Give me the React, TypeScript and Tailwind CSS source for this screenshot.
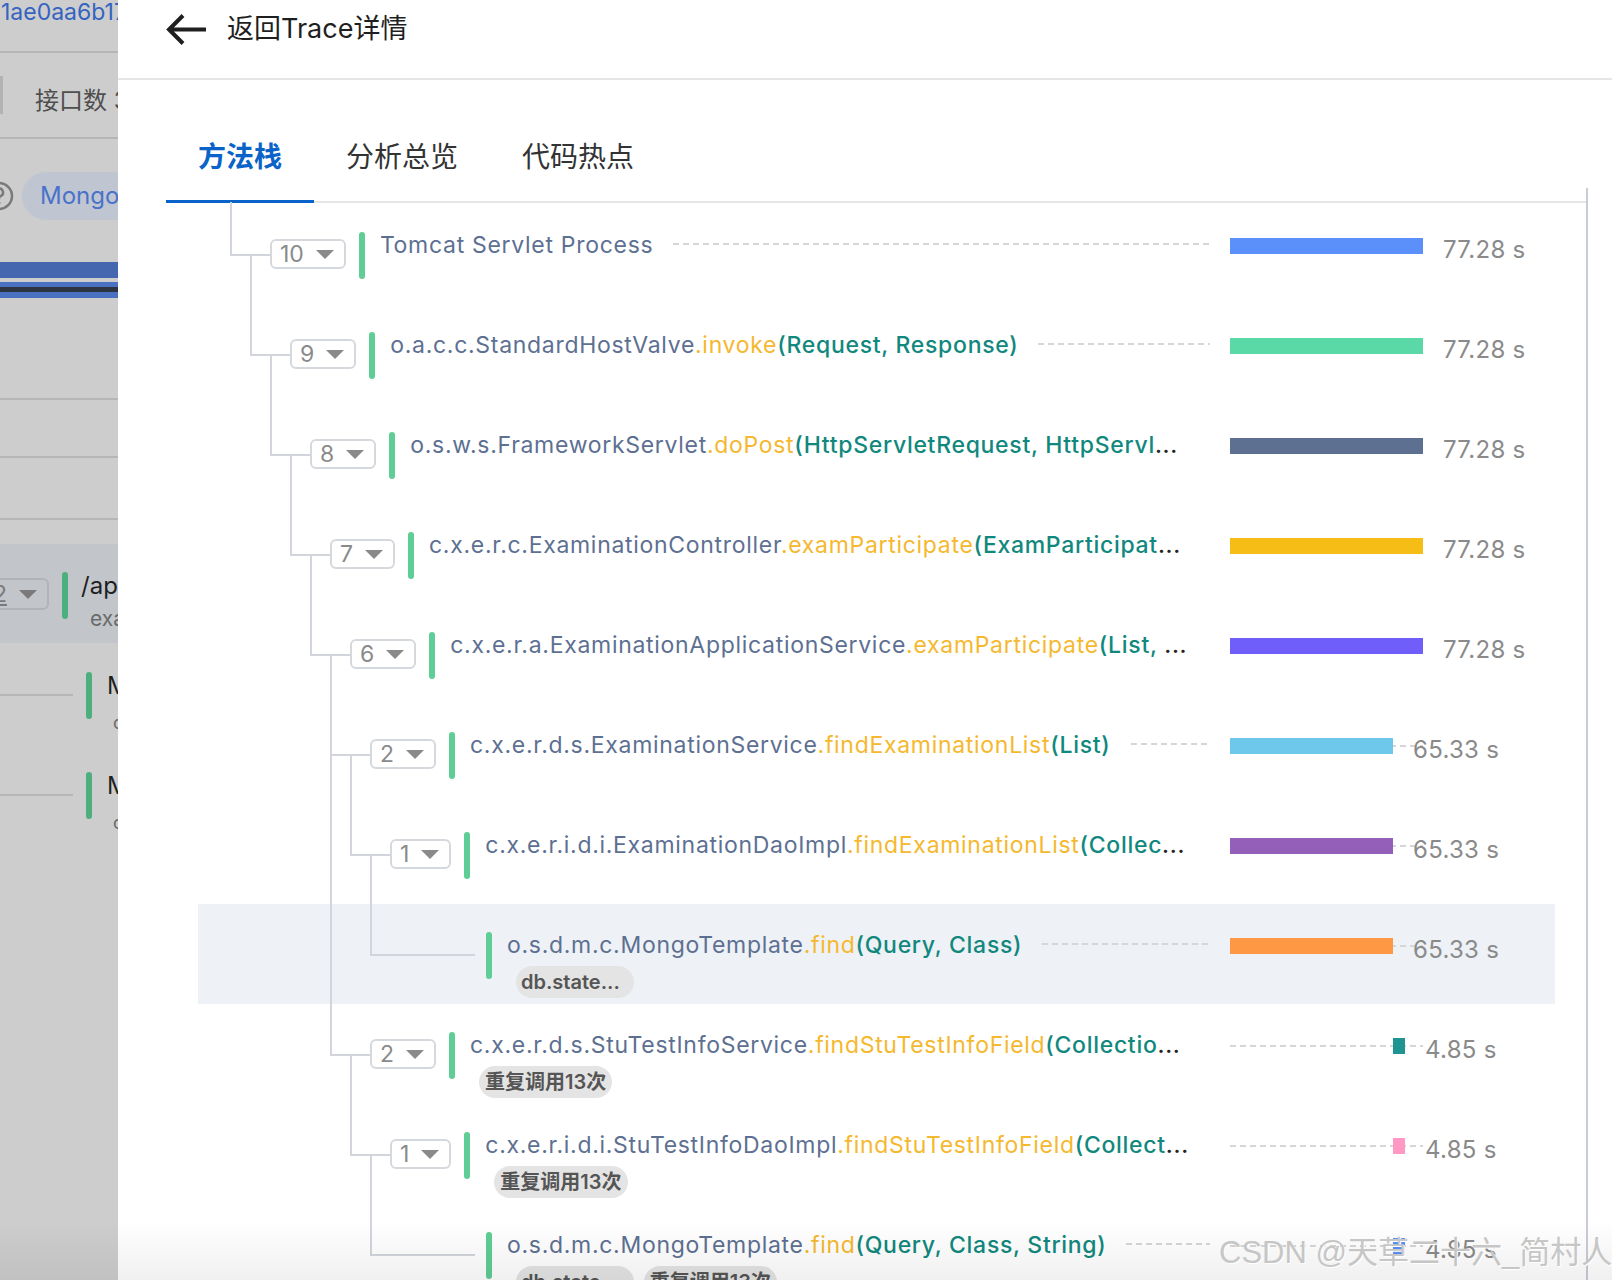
import React from 'react';

type Row = {
  d: number;
  n?: string;
  cls: string;
  m?: string;
  p?: string;
  ell?: boolean;
  tags?: string[];
  off: number;
  w: number;
  t: string;
  color: string;
  hl?: boolean;
};

const rows: Row[] = [
  { d: 1, n: '10', cls: 'Tomcat Servlet Process', off: 0, w: 193, t: '77.28 s', color: '#5B8FF9' },
  { d: 2, n: '9', cls: 'o.a.c.c.StandardHostValve', m: '.invoke', p: '(Request, Response)', off: 0, w: 193, t: '77.28 s', color: '#5AD8A6' },
  { d: 3, n: '8', cls: 'o.s.w.s.FrameworkServlet', m: '.doPost', p: '(HttpServletRequest, HttpServl', ell: true, off: 0, w: 193, t: '77.28 s', color: '#5D7092' },
  { d: 4, n: '7', cls: 'c.x.e.r.c.ExaminationController', m: '.examParticipate', p: '(ExamParticipat', ell: true, off: 0, w: 193, t: '77.28 s', color: '#F6BD16' },
  { d: 5, n: '6', cls: 'c.x.e.r.a.ExaminationApplicationService', m: '.examParticipate', p: '(List, ', ell: true, off: 0, w: 193, t: '77.28 s', color: '#6F5EF9' },
  { d: 6, n: '2', cls: 'c.x.e.r.d.s.ExaminationService', m: '.findExaminationList', p: '(List)', off: 0, w: 163, t: '65.33 s', color: '#6DC8EC' },
  { d: 7, n: '1', cls: 'c.x.e.r.i.d.i.ExaminationDaoImpl', m: '.findExaminationList', p: '(Collec', ell: true, off: 0, w: 163, t: '65.33 s', color: '#945FB9' },
  { d: 8, cls: 'o.s.d.m.c.MongoTemplate', m: '.find', p: '(Query, Class)', tags: ['db.state...'], off: 0, w: 163, t: '65.33 s', color: '#FF9845', hl: true },
  { d: 6, n: '2', cls: 'c.x.e.r.d.s.StuTestInfoService', m: '.findStuTestInfoField', p: '(Collectio', ell: true, tags: ['重复调用13次'], off: 163, w: 12, t: '4.85 s', color: '#1E9493' },
  { d: 7, n: '1', cls: 'c.x.e.r.i.d.i.StuTestInfoDaoImpl', m: '.findStuTestInfoField', p: '(Collect', ell: true, tags: ['重复调用13次'], off: 163, w: 12, t: '4.85 s', color: '#FF99C3' },
  { d: 8, cls: 'o.s.d.m.c.MongoTemplate', m: '.find', p: '(Query, Class, String)', tags: ['db.state...', '重复调用13次'], off: 163, w: 12, t: '4.85 s', color: '#5B8FF9' },
];

function Caret({ color = '#8a8a8a' }: { color?: string }) {
  return (
    <svg width="18" height="9" viewBox="0 0 18 9" className="shrink-0">
      <polygon points="0,0 18,0 9,9" fill={color} />
    </svg>
  );
}

function Connectors() {
  const lines: React.ReactNode[] = [];
  rows.forEach((r, i) => {
    const Lx = 72 + 20 * (r.d - 1);
    const cy = 100 * i + 51;
    const vx = Lx - 39;
    const hEnd = r.n ? Lx : Lx + 65;
    lines.push(<line key={'h' + i} x1={Lx - 40} y1={cy} x2={hEnd} y2={cy} />);
    let py = -2;
    if (r.d > 1) {
      for (let j = i - 1; j >= 0; j--) {
        if (rows[j].d === r.d - 1) {
          py = 100 * j + 51 - 1;
          break;
        }
      }
    }
    lines.push(<line key={'v' + i} x1={vx} y1={py} x2={vx} y2={cy + 1} />);
  });
  return (
    <svg
      className="pointer-events-none absolute left-0 top-0 overflow-visible"
      width="1357"
      height="1100"
      stroke="#d2d5db"
      strokeWidth="2"
      fill="none"
    >
      {lines}
    </svg>
  );
}

function TreeRow({ r }: { r: Row }) {
  const barEnd = r.off + r.w;
  return (
    <div className={`flex h-[100px] ${r.hl ? 'bg-[#eef1f6]' : ''}`}>
      <div className="flex min-w-0 flex-1 items-start pt-[28px]" style={{ paddingLeft: 72 + 20 * (r.d - 1) }}>
        {r.n ? (
          <div className="mt-[7px] flex h-[30px] shrink-0 items-center rounded-[6px] border-2 border-[#d5d8dd] bg-white pl-[8px] pr-[10px]">
            <span className="text-[23px] leading-none text-[#8a8a8a]">{r.n}</span>
            <span className="ml-[12px] flex">
              <Caret />
            </span>
          </div>
        ) : (
          <div className="w-[63px] shrink-0" />
        )}
        <div className="ml-[13px] h-[47px] w-[6px] shrink-0 rounded-full bg-[#5fcd96]" />
        <div className="ml-[15px] flex min-w-0 flex-1 flex-col">
          <div className="flex items-start">
            <div className="min-w-0 overflow-hidden text-ellipsis whitespace-nowrap text-[23px] leading-[26px] tracking-[0.7px] text-[#222]">
              <span className="text-[#5D7092]">{r.cls}</span>
              {r.m && <span className="text-[#f5b82e]">{r.m}</span>}
              {r.p && <span className="font-medium text-[#11887e]">{r.p}</span>}
              {r.ell && <span className="font-medium text-[#222]">...</span>}
            </div>
            {!r.ell && (
              <div className="ml-5 mt-[11px] h-[2px] min-w-0 flex-1 bg-[linear-gradient(to_right,#d6d6d6_60%,transparent_60%)] bg-[length:10px_2px] bg-repeat-x" />
            )}
          </div>
          {r.tags && (
            <div className="ml-[9px] mt-[8px] flex gap-[10px]">
              {r.tags.map((t, k) => (
                <span
                  key={k}
                  className={`h-[32px] whitespace-nowrap rounded-full bg-[#e4e4e4] text-[20px] font-semibold leading-[32px] text-[#555] ${
                    t.startsWith('db') ? 'pl-[5px] pr-[14px]' : 'px-[6px]'
                  }`}
                >
                  {t}
                </span>
              ))}
            </div>
          )}
        </div>
      </div>
      <div className="relative ml-5 w-[193px] shrink-0">
        <div className="absolute left-0 right-0 top-[41px] h-[2px] bg-[linear-gradient(to_right,#d6d6d6_60%,transparent_60%)] bg-[length:10px_2px] bg-repeat-x" />
        <div className="absolute top-[34px] h-[16px]" style={{ left: r.off, width: r.w, backgroundColor: r.color }} />
        <div
          className="absolute top-[32px] whitespace-nowrap text-[24px] leading-[28px] tracking-[0.3px] text-[#8a8a8a]"
          style={{ left: barEnd + 20 }}
        >
          {r.t}
        </div>
      </div>
      <div className="w-[132px] shrink-0" />
    </div>
  );
}

function LeftPanel() {
  return (
    <div className="flex h-full w-[118px] shrink-0 flex-col overflow-hidden bg-[#cdcdcd]">
      <div className="h-[51px] whitespace-nowrap pl-[1px] text-[23px] leading-[25px] text-[#3563c2]">1ae0aa6b17</div>
      <div className="h-[2px] bg-[#b6b6b6]" />
      <div className="flex h-[84px] items-center pt-[12px]">
        <div className="-mt-[12px] h-[38px] w-[3px] shrink-0 bg-[#b3b3b3]" />
        <span className="ml-[32px] whitespace-nowrap text-[24px] text-[#4f4f4f]">接口数 3</span>
      </div>
      <div className="h-[2px] bg-[#b6b6b6]" />
      <div className="flex h-[123px] items-start pt-[33px]">
        <svg width="30" height="30" viewBox="0 0 30 30" className="-ml-[16px] mt-[9px] shrink-0">
          <circle cx="15" cy="15" r="13" fill="none" stroke="#7a7a7a" strokeWidth="2.5" />
          <path d="M11 11.5a4 4 0 1 1 5.5 3.7c-1 .4-1.5 1.2-1.5 2.3v.8" fill="none" stroke="#7a7a7a" strokeWidth="2.5" />
          <circle cx="15" cy="22" r="1.5" fill="#7a7a7a" />
        </svg>
        <div className="ml-[8px] flex h-[48px] shrink-0 items-center rounded-full bg-[#bfc6d2] pl-[18px] pr-[20px] text-[24px] text-[#4a72c8]">
          Mongo
        </div>
      </div>
      <div className="h-[16px] bg-[#4467b0]" />
      <div className="h-[4px]" />
      <div className="h-[5px] bg-[#4a70c2]" />
      <div className="h-[5px] bg-[#2c3441]" />
      <div className="h-[6px] bg-[#4a70c2]" />
      <div className="h-[100px]" />
      <div className="h-[2px] bg-[#b6b6b6]" />
      <div className="h-[56px]" />
      <div className="h-[2px] bg-[#b6b6b6]" />
      <div className="h-[60px]" />
      <div className="h-[2px] bg-[#b6b6b6]" />
      <div className="h-[24px]" />
      <div className="flex h-[99px] items-start bg-[#c2c5ca] pt-[28px]">
        <div className="-ml-[17px] mt-[6px] flex h-[32px] w-[66px] shrink-0 items-center rounded-[6px] border-2 border-[#b0b3b8] pl-[8px]">
          <span className="text-[23px] leading-none text-[#7a7a7a] underline">2</span>
          <span className="ml-[12px] flex">
            <Caret color="#7a7a7a" />
          </span>
        </div>
        <div className="ml-[13px] h-[47px] w-[6px] shrink-0 rounded-full bg-[#4caf7d]" />
        <div className="ml-[13px] flex flex-col whitespace-nowrap">
          <span className="text-[24px] leading-[28px] text-[#1f1f1f]">/api</span>
          <span className="ml-[9px] mt-[6px] text-[21px] leading-[26px] text-[#6b6b6b]">exam</span>
        </div>
      </div>
      {[0, 1].map((k) => (
        <div key={k} className="relative flex h-[100px] items-start pt-[29px]">
          <div className="mt-[22px] h-[2px] w-[73px] shrink-0 bg-[#b6b6b6]" />
          <div className="ml-[13px] h-[47px] w-[6px] shrink-0 rounded-full bg-[#4caf7d]" />
          <div className="ml-[15px] flex flex-col whitespace-nowrap">
            <span className="text-[24px] leading-[28px] text-[#1f1f1f]">M</span>
            <span className="ml-[6px] mt-[10px] text-[18px] leading-[26px] text-[#6b6b6b]">c</span>
          </div>
        </div>
      ))}
    </div>
  );
}

export default function App() {
  return (
    <div className="relative flex h-[1280px] w-[1612px] overflow-hidden bg-white font-[Inter,'Noto_Sans_CJK_SC',sans-serif]">
      <LeftPanel />
      <main className="min-w-0 flex-1 bg-white">
        <header className="flex h-[80px] items-center border-b-2 border-[#e6e6e6] pb-[20px] pl-[47px]">
          <svg width="42" height="34" viewBox="0 0 42 34" className="mt-[2px] shrink-0">
            <path d="M41 16.5H5 M18 2.5 L4 16.5 L18 30.5" fill="none" stroke="#1f1f1f" strokeWidth="4" />
          </svg>
          <span className="ml-5 text-[27px] text-[#1f1f1f]">返回Trace详情</span>
        </header>
        <div className="ml-[48px] w-[1422px]">
          <div className="flex h-[123px] items-end border-b-2 border-[#e5e5e5]">
            <div className="-mb-[2px] border-b-[3px] border-[#0a63c9] px-[32px] pb-[23px] text-[28px] font-bold leading-[40px] text-[#0a63c9]">
              方法栈
            </div>
            <div className="-mb-[2px] border-b-[3px] border-transparent px-[32px] pb-[23px] text-[28px] leading-[40px] text-[#333]">
              分析总览
            </div>
            <div className="-mb-[2px] border-b-[3px] border-transparent px-[32px] pb-[23px] text-[28px] leading-[40px] text-[#333]">
              代码热点
            </div>
          </div>
          <div className="-mt-[15px] border-r-2 border-[#c8ccd3] pt-[16px]">
            <div className="relative ml-[32px] w-[1357px]">
              {rows.map((r, i) => (
                <TreeRow key={i} r={r} />
              ))}
              <Connectors />
            </div>
          </div>
        </div>
      </main>
      <div className="pointer-events-none absolute bottom-0 left-0 h-[60px] w-full bg-[linear-gradient(to_bottom,rgba(0,0,0,0),rgba(0,0,0,0.06))]" />
      <div className="pointer-events-none absolute left-[1219px] top-[1231px] whitespace-nowrap font-['Liberation_Sans','Noto_Sans_CJK_SC',sans-serif] text-[31px] leading-[44px] text-[#c6c6c6] [text-shadow:1px_1px_0_#ffffff]">
        CSDN @天草二十六_简村人
      </div>
    </div>
  );
}
